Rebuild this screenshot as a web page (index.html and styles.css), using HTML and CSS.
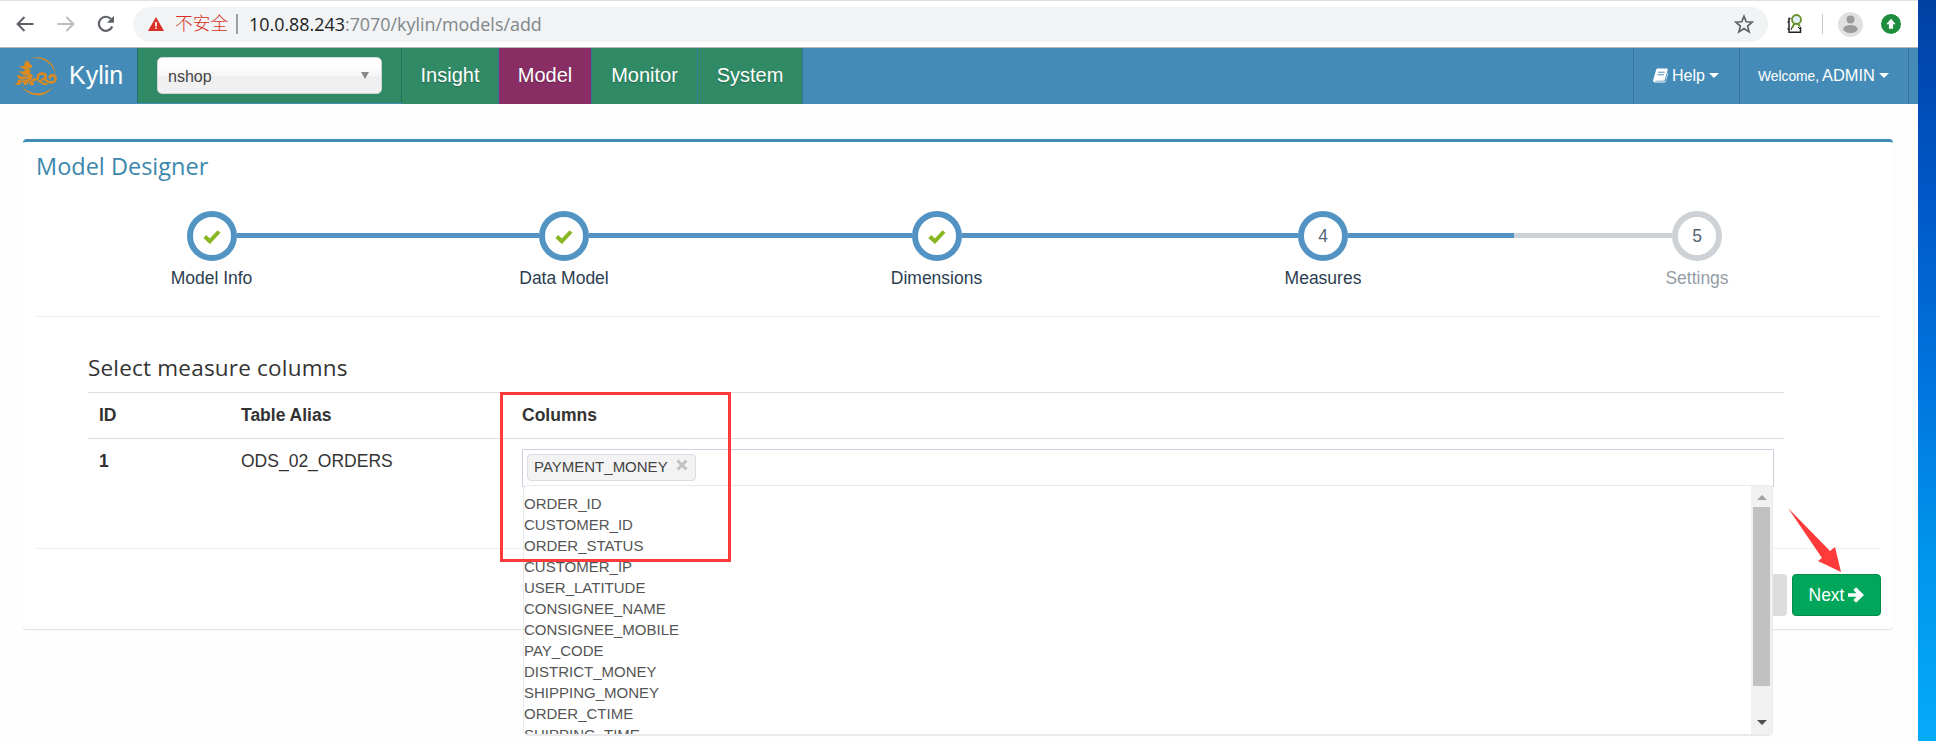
FILE: index.html
```html
<!DOCTYPE html>
<html lang="en">
<head>
<meta charset="utf-8">
<title>Kylin</title>
<link rel="stylesheet" href="styles.css">
</head>
<body>
<div class="window">
  <header class="toolbar">
    <svg class="tool-icon back" viewBox="0 0 18 16"><path d="M17.5 8H2M8.5 1L1.6 8l6.900 7"/></svg>
    <svg class="tool-icon forward" viewBox="0 0 18 16"><path d="M.5 8H16M9.500 1l6.900 7-6.900 7"/></svg>
    <svg class="tool-icon reload" viewBox="0 0 18 18"><path d="M15.300 11.500A7 7 0 1 1 14 4"/><path class="solid" d="M17 .8v7h-7z"/></svg>
    <div class="omnibox">
      <svg class="warning" viewBox="0 0 16 14"><path fill="#d93025" d="M8 0l8 14H0z"/><path fill="#fff" d="M7.200 5h1.600v4.500H7.200zM7.200 10.500h1.600V12H7.200z"/></svg>
      <span class="insecure">不安全</span>
      <span class="bar"></span>
      <span class="url"><b>10.0.88.243</b>:7070/kylin/models/add</span>
      <svg class="star" viewBox="0 0 20 20"><path d="M10 2.200l2.200 5.600 6 .4-4.600 3.800 1.500 5.900L10 14.600l-5.100 3.300 1.500-5.900L1.800 8.200l6-.4z"/></svg>
    </div>
    <svg class="extension" viewBox="0 0 16 20"><path fill="none" stroke="#222" stroke-width="1.500" d="M3.500 4.500H2v13.700h11.500V13M2 8H.5M2 15H.5"/><path fill="none" stroke="#222" d="M4 16c1-3 2-4 3-5M11 13l2 2"/><path stroke="#67912c" stroke-width="2" d="M7.500 9.500L5 14M11 9.500l2 3"/><circle cx="9.500" cy="5.500" r="4.500" fill="#dff0f7" stroke="#67912c" stroke-width="1.800"/></svg>
    <span class="tool-sep"></span>
    <svg class="avatar" viewBox="0 0 25 25"><circle cx="12.500" cy="12.500" r="12.500" fill="#e0e0e0"/><circle cx="12.500" cy="7.500" r="4" fill="#9b9b9b"/><ellipse cx="12.500" cy="17" rx="7.300" ry="4" fill="#9b9b9b"/></svg>
    <svg class="update" viewBox="0 0 20 20"><circle cx="10" cy="10" r="10" fill="#1e8e3e"/><path fill="#fff" d="M10 4.800l4.700 5.400h-2.600v4.600H7.900v-4.600H5.300z"/></svg>
  </header>

  <nav class="navbar">
    <a class="brand">
      <svg class="logo" viewBox="15 18 126 120">
        <path fill="#d98a20" d="M62 25Q88 16 112 30Q136 46 137 76Q130 46 108 33Q88 22 62 25zM34 106Q52 130 82 130Q108 130 128 110Q110 138 80 136Q48 134 34 106z"/>
        <path fill="#d98a20" d="M44 40L49 29L52 36L60 32L58 41L67 46L64 54L54 55L62 60L60 70L68 76L66 88L56 94L50 99L52 105L40 105L42 96L32 98L30 105L16 104L17 99L24 98L22 90L34 88L24 84L20 74L34 78L44 76L32 70L25 62L38 65L46 60L36 55L26 47L38 49L42 47z"/>
        <path fill="none" stroke="#448cb7" stroke-width="2.500" d="M28 74Q42 84 54 74M32 90Q44 92 54 84"/>
        <path fill="none" stroke="#d98a20" stroke-width="8" d="M68 88Q84 92 84 80Q84 70 98 71Q110 72 106 84Q104 92 116 96Q136 100 137 86Q136 74 124 76Q116 80 122 86"/>
        <path fill="none" stroke="#d98a20" stroke-width="6" d="M54 100Q62 96 70 91M68 94L64 103L72 103M104 84L88 94Q98 98 100 102H112"/>
      </svg>
      <span>Kylin</span>
    </a>
    <div class="project"><div class="select"><span>nshop</span><i></i></div></div>
    <a class="tab insight">Insight</a>
    <a class="tab model">Model</a>
    <a class="tab monitor">Monitor</a>
    <a class="tab system">System</a>
    <div class="user-menu">
      <a class="help"><svg class="book" viewBox="0 0 16 15"><path fill="#fff" d="M5 0h9.500c1 0 1.400.7 1.200 1.500l-3 10c-.3 1-1 1.500-2 1.500H3c-.8 0-1 .8 0 .9h8.500c1 0 1.500-.4 1.800-1.300l2.300-8c.5.4.5.9.3 1.500l-2.400 7.500c-.4 1-1 1.400-2 1.400H2.300C.8 15-.2 13.600.2 12.300l3-10.500C3.500.6 4 0 5 0z"/><path stroke="#448cb7" d="M5.500 4h7M4.700 6.700h7"/></svg><span>Help</span><i class="caret"></i></a>
      <a class="welcome"><small>Welcome,</small><span>ADMIN</span><i class="caret"></i></a>
      <span class="nav-end"></span>
    </div>
  </nav>

  <main class="panel">
    <h3 class="title">Model Designer</h3>
    <ol class="steps">
      <li class="done"><div class="track"><span class="dot"><svg viewBox="0 0 18 15"><path d="M1.800 7.500l5 4.800L16 2.500"/></svg></span></div><span class="label">Model Info</span></li>
      <li class="done"><div class="track"><span class="dot"><svg viewBox="0 0 18 15"><path d="M1.800 7.500l5 4.800L16 2.500"/></svg></span></div><span class="label">Data Model</span></li>
      <li class="done"><div class="track"><span class="dot"><svg viewBox="0 0 18 15"><path d="M1.800 7.500l5 4.800L16 2.500"/></svg></span></div><span class="label">Dimensions</span></li>
      <li class="active"><div class="track"><span class="dot">4</span></div><span class="label">Measures</span></li>
      <li class="pending"><div class="track"><span class="dot">5</span></div><span class="label">Settings</span></li>
    </ol>

    <section class="measures">
      <h4 class="subtitle">Select measure columns</h4>
      <div class="row head"><span>ID</span><span>Table Alias</span><span>Columns</span></div>
      <div class="row">
        <b>1</b><span>ODS_02_ORDERS</span>
        <div class="picker">
          <span class="chip">PAYMENT_MONEY<svg viewBox="0 0 12 12"><path d="M1.500 1.500l9 9M10.500 1.500l-9 9"/></svg></span>
          <div class="dropdown">
            <ul>
              <li>ORDER_ID</li><li>CUSTOMER_ID</li><li>ORDER_STATUS</li><li>CUSTOMER_IP</li><li>USER_LATITUDE</li><li>CONSIGNEE_NAME</li><li>CONSIGNEE_MOBILE</li><li>PAY_CODE</li><li>DISTRICT_MONEY</li><li>SHIPPING_MONEY</li><li>ORDER_CTIME</li><li>SHIPPING_TIME</li>
            </ul>
            <div class="scrollbar"><i class="up"></i><i class="thumb"></i><i class="down"></i></div>
          </div>
        </div>
      </div>
    </section>

    <footer class="actions">
      <span class="prev"></span>
      <a class="next">Next<svg viewBox="0 0 16 16"><path d="M0 6.200h8.500L5.300 3l2.800-2.800L16 8l-7.900 7.800L5.300 13l3.200-3.200H0z"/></svg></a>
    </footer>
  </main>
</div>
<div class="desktop"></div>

<div class="highlight"></div>
<svg class="pointer" viewBox="0 0 53 64"><path fill="#ff3a3a" d="M0 0l42 43 5-4 6 25-23-11 4-3z"/></svg>
</body>
</html>
```
FILE: styles.css
```css
* { box-sizing: border-box; }

body {
  margin: 0;
  height: 741px;
  display: flex;
  overflow: hidden;
  position: relative;
  background: #fefefe;
  font-family: "Liberation Sans", Arial, sans-serif;
  font-size: 17.5px;
  color: #333;
}

.window { width: 1918px; height: 741px; }
.desktop {
  flex: 1;
  background: linear-gradient(#0041a3, #0056c6 25%, #0075df 52%, #0096ee 76%, #05abf8);
}

/* Browser toolbar */
.toolbar {
  height: 48px;
  display: flex;
  align-items: center;
  background: #fff;
  border-top: 1px solid #dee1e6;
  border-bottom: 1px solid #b6b6b6;
}
.tool-icon { fill: none; stroke: #5f6368; stroke-width: 2; height: 16px; width: 18px; }
.back { margin-left: 16px; }
.forward { margin-left: 23px; stroke: #bcbec1; }
.reload { margin-left: 22px; height: 18px; stroke-width: 2.2; }
.reload .solid { fill: #5f6368; stroke: none; }
.omnibox {
  width: 1635px;
  height: 35px;
  margin-left: 18px;
  border-radius: 18px;
  background: #f1f3f4;
  display: flex;
  align-items: center;
  padding: 0 14px 0 15px;
}
.warning { width: 16px; height: 14px; }
.insecure {
  margin-left: 11px;
  width: 54px;
  font: 300 17.8px/35px "Noto Sans CJK SC", sans-serif;
  margin-top: -3px;
  color: #d93025;
}
.bar { width: 2px; height: 20px; margin-left: 7px; background: #9a9da1; }
.url { margin-left: 11px; font: 17.9px/34px "Open Sans", "Noto Sans", sans-serif; margin-top: -1px; color: #80868b; white-space: nowrap; }
.url b { font-weight: 400; color: #202124; }
.star { margin-left: auto; width: 20px; height: 20px; fill: none; stroke: #5f6368; stroke-width: 1.7; }
.extension { width: 16px; height: 20px; margin-left: 19px; }
.tool-sep { width: 1px; height: 20px; margin-left: 19px; background: #c8c8c8; }
.avatar { width: 25px; height: 25px; margin-left: 15px; }
.update { width: 20px; height: 20px; margin-left: 18px; }

/* Application bar */
.navbar { height: 56px; display: flex; background: #448cb7; color: #fff; }
.brand { width: 137px; display: flex; align-items: center; font-size: 25px; padding-left: 15px; }
.brand span { margin: -2px 0 0 12px; }
.logo { width: 42px; height: 40px; }
.project {
  width: 265px;
  height: 55px;
  padding: 9px 0 0 19px;
  background: #2f8a65;
  border-left: 1px solid #256f68;
  border-right: 1px solid #25705a;
}
.select {
  width: 225px;
  height: 37px;
  display: flex;
  align-items: center;
  justify-content: space-between;
  padding: 2px 12px 0 10px;
  border: 1px solid #cfd6d2;
  border-radius: 5px;
  background: linear-gradient(#fff 20%, #f6f6f6 50%, #eee 52%, #f2f2f2);
  color: #444;
  font-size: 16px;
}
.select i { border: 4px solid transparent; border-top: 7px solid #888; border-bottom: 0; margin-top: -3px; }
.tab {
  background: #2f8a65;
  border-right: 1px solid #34779a;
  font-size: 20px;
  line-height: 54px;
  text-align: center;
  text-shadow: 0 1px 1px rgba(0, 0, 0, .25);
}
.insight { width: 97px; }
.model { width: 93px; background: #892e64; }
.monitor { width: 106px; }
.system { width: 105px; }
.user-menu { margin-left: auto; display: flex; font-size: 16px; }
.user-menu a { display: flex; align-items: center; border-left: 1px solid #36749a; padding-bottom: 1px; }
.help { width: 106px; padding-left: 19px; }
.book { width: 15px; height: 15px; margin-right: 4px; }
.welcome { width: 169px; padding-left: 18px; }
.welcome small { font-size: 13.8px; margin: 1px 3px 0 0; }
.welcome span { font-size: 16.4px; }
.caret { border: 5.5px solid transparent; border-width: 5px 5.5px 0; border-top-color: #fff; margin-left: 4px; }
.nav-end { width: 10px; border-left: 1px solid #36749a; }

/* Designer panel */
.panel {
  width: 1870px;
  height: 490px;
  margin: 35px 0 0 23px;
  padding: 0 12px 0 13px;
  background: #fff;
  border-top: 3px solid #3f8dbb;
  border-radius: 4px;
  box-shadow: 0 1px 1px rgba(0, 0, 0, .12);
}
.title, .subtitle { margin: 0; font-family: "Open Sans", "Noto Sans", sans-serif; font-weight: 400; white-space: nowrap; }
.title { height: 69px; font-size: 23.5px; line-height: 48px; color: #3c87ad; }

.steps {
  list-style: none;
  margin: 0;
  padding: 0;
  height: 106px;
  display: grid;
  grid-template-columns: 351px 354px 391px 382px 366px;
  border-bottom: 1px solid #eee;
}
.steps li { text-align: center; color: #2c3e50; }
.track { display: flex; align-items: center; height: 50px; }
.track::before, .track::after { content: ""; flex: 1; height: 5px; background: #5293c4; margin-top: -1px; }
.steps li:first-child .track::before, .steps li:last-child .track::after { visibility: hidden; }
.dot {
  width: 50px;
  height: 50px;
  border: 6px solid #5293c4;
  border-radius: 50%;
  display: flex;
  align-items: center;
  justify-content: center;
  color: #546474;
}
.dot svg { width: 18px; height: 15px; fill: none; stroke: #87b824; stroke-width: 4; }
.pending .track::before { background: #ced1d6; }
.pending .dot { border-color: #ced1d6; }
.label { display: block; line-height: 24px; margin-top: 5px; }
.steps .pending .label { color: #949ea7; }

.measures { height: 232px; padding: 36px 97px 0 52px; border-bottom: 1px solid #eee; }
.subtitle { height: 39px; font-size: 22.5px; line-height: 29px; letter-spacing: .2px; }
.row { display: grid; grid-template-columns: 142px 281px 1252px; padding: 10px 0 0 11px; height: 46px; border-top: 1px solid #ddd; line-height: 25px; }
.head { font-weight: 700; }
.picker {
  position: relative;
  height: 38px;
  padding: 4px;
  border: 1px solid #cfd0de;
  line-height: 23px;
}
.chip {
  display: inline-flex;
  width: 169px;
  height: 27px;
  padding-left: 6px;
  background: #f3f3f3;
  border: 1px solid #dcdce2;
  border-radius: 4px;
  font-size: 15px;
  color: #444;
}
.chip svg { width: 12px; height: 12px; margin: 4px 7px 0 auto; fill: none; stroke: #c2c2c2; stroke-width: 3; }
.dropdown {
  position: absolute;
  top: 35px;
  left: 0;
  width: 1250px;
  height: 251px;
  display: flex;
  justify-content: space-between;
  overflow: hidden;
  border: 1px solid #e9e9e9;
  border-bottom-width: 2px;
  border-radius: 5px;
  background: #fff;
}
.dropdown ul { list-style: none; margin: 0; padding: 7px 0 0; font-size: 15px; line-height: 21px; color: #555; }
.scrollbar { width: 21px; background: #f1f1f1; display: flex; flex-direction: column; align-items: center; padding: 9px 0; }
.up { border: 5px solid transparent; border-bottom-color: #a3a3a3; border-top: 0; }
.thumb { width: 17px; height: 179px; margin-top: 7px; background: #c1c1c1; }
.down { border: 5px solid transparent; border-top-color: #505050; border-bottom: 0; margin-top: auto; }

.actions { display: flex; justify-content: flex-end; gap: 5px; padding-top: 25px; }
.prev { width: 72px; height: 42px; background: #ddd; border-radius: 4px; }
.next {
  width: 89px;
  height: 42px;
  display: flex;
  align-items: center;
  justify-content: center;
  gap: 4px;
  border: 1px solid #008d4c;
  border-radius: 4px;
  background: #00a65a;
  color: #fff;
}
.next svg { width: 16px; height: 16px; fill: #fff; }

/* Annotations laid over the page */
.highlight { position: absolute; left: 500px; top: 392px; width: 231px; height: 170px; border: 3px solid #ff3a3a; }
.pointer { position: absolute; left: 1788px; top: 508px; width: 53px; height: 64px; }
```
